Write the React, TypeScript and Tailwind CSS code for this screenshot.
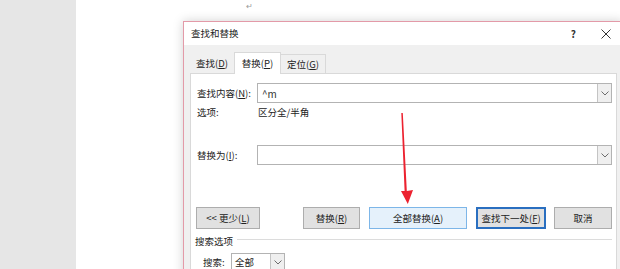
import React from 'react'

const font = { fontFamily: '"Noto Sans CJK SC", "Microsoft YaHei", sans-serif' }

const Key = ({ k }: { k: string }) => (
  <>
    (<span className="underline underline-offset-[1px] decoration-[0.5px]">{k}</span>)
  </>
)

const Chevron = () => (
  <svg width="8" height="5" viewBox="0 0 8 5">
    <path d="M0.5 0.5 L4 4 L7.5 0.5" fill="none" stroke="#6d6d6d" strokeWidth="1" />
  </svg>
)

const DropBtn = () => (
  <div className="w-[14px] h-full bg-[#efefef] border-l border-[#c4c4c4] flex items-center justify-center">
    <Chevron />
  </div>
)

const ComboInput = ({ value }: { value?: string }) => (
  <div className="w-[355px] h-[20px] border border-[#b3b3b3] bg-white flex items-stretch">
    <div className="flex-1 pl-[4px] flex items-center text-[10px] text-[#333]">{value}</div>
    <DropBtn />
  </div>
)

const Button = ({
  w,
  kind = 'normal',
  children,
}: {
  w: string
  kind?: 'normal' | 'hover' | 'default'
  children: React.ReactNode
}) => {
  const styles = {
    normal: 'bg-[#e1e1e1] border border-[#adadad]',
    hover: 'bg-[#e5f1fb] border border-[#7db6e8]',
    default: 'bg-[#e1e1e1] border-2 border-[#2a6fc0]',
  }
  return (
    <div className={`${w} h-[22px] flex items-center justify-center text-[9.5px] text-[#222] ${styles[kind]}`}>
      {children}
    </div>
  )
}

export default function App() {
  return (
    <div className="relative w-[620px] h-[269px] overflow-hidden flex bg-white" style={font}>
      {/* document background */}
      <div className="w-[76px] h-full bg-[#e6e6e6] shrink-0" />

      <div className="flex-1 flex flex-col">
        <div className="h-[21px] shrink-0 pl-[170px] pt-[1px] text-[8px] leading-[9px] text-[#9a9a9a]">↵</div>

        {/* dialog */}
        <div className="shrink-0 ml-[107px] w-[440px] h-[260px] border border-[#e39aa8] bg-[#f0f0f0] shadow-[0_0_10px_rgba(0,0,0,0.18)] flex flex-col">
          <div className="h-[23px] shrink-0 bg-white flex items-center justify-between pl-[7px] pr-[11px] text-[9.5px] text-[#222]">
            <span>查找和替换</span>
            <div className="flex items-center gap-[25px]">
              <span className="text-[10px] font-semibold text-[#333]">?</span>
              <svg width="10" height="10" viewBox="0 0 10 10">
                <path d="M0.5 0.5 L9.5 9.5 M9.5 0.5 L0.5 9.5" stroke="#333" strokeWidth="1" />
              </svg>
            </div>
          </div>

          <div className="pl-[6px] pt-[7px] flex flex-col">
            {/* tabs */}
            <div className="flex items-end h-[21px] text-[9.5px] text-[#222]">
              <div className="w-[44px] h-[19px] flex items-center justify-center">
                查找<Key k="D" />
              </div>
              <div className="w-[47px] h-[22px] -mb-px bg-white border border-b-0 border-[#d9d9d9] flex items-center justify-center relative z-10">
                替换<Key k="P" />
              </div>
              <div className="w-[45px] h-[19px] border border-b-0 border-l-0 border-[#d9d9d9] flex items-center justify-center">
                定位<Key k="G" />
              </div>
            </div>

            {/* tab pane */}
            <div className="w-[427px] h-[200px] shrink-0 bg-white border border-[#d9d9d9] pl-[6px] pt-[9px] text-[9.5px] text-[#222] flex flex-col">
              <div className="flex items-center">
                <div className="w-[60px]">
                  查找内容<Key k="N" />:
                </div>
                <ComboInput value="^m" />
              </div>

              <div className="flex items-center mt-[3px] h-[12px]">
                <div className="w-[61px]">选项:</div>
                <div>区分全/半角</div>
              </div>

              <div className="flex items-center mt-[27px]">
                <div className="w-[60px]">
                  替换为<Key k="I" />:
                </div>
                <ComboInput />
              </div>

              <div className="flex items-center mt-[42px] -ml-px">
                <Button w="w-[64px]">
                  &lt;&lt; 更少<Key k="L" />
                </Button>
                <div className="ml-[43px]">
                  <Button w="w-[57px]">
                    替换<Key k="R" />
                  </Button>
                </div>
                <div className="ml-[9px]">
                  <Button w="w-[98px]" kind="hover">
                    全部替换<Key k="A" />
                  </Button>
                </div>
                <div className="ml-[9px]">
                  <Button w="w-[70px]" kind="default">
                    查找下一处<Key k="F" />
                  </Button>
                </div>
                <div className="ml-[8px]">
                  <Button w="w-[58px]">取消</Button>
                </div>
              </div>

              <div className="flex items-center mt-[6px] -ml-[2px] h-[12px] pr-[4px] gap-[4px]">
                <span>搜索选项</span>
                <div className="flex-1 h-px bg-[#dcdcdc] -mt-[3px]" />
              </div>

              <div className="flex items-center mt-[6px] pl-[6px]">
                <div className="w-[28px]">搜索:</div>
                <div className="w-[54px] h-[18px] border border-[#b3b3b3] bg-white flex items-stretch">
                  <div className="flex-1 pl-[3px] flex items-center">全部</div>
                  <DropBtn />
                </div>
              </div>
            </div>
          </div>
        </div>
      </div>

      {/* red annotation arrow */}
      <svg className="absolute left-0 top-0 pointer-events-none" width="620" height="269" viewBox="0 0 620 269">
        <polygon
          points="401.3,113 402.8,113 406.8,191 413,190 407.8,204 401,191 404.6,191"
          fill="#ec2230"
        />
      </svg>
    </div>
  )
}
